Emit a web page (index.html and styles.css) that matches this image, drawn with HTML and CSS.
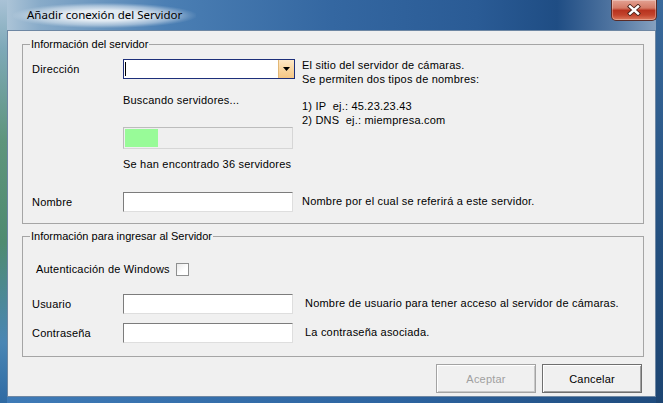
FILE: index.html
```html
<!DOCTYPE html>
<html lang="es">
<head>
  <meta charset="UTF-8" />
  <title>Añadir conexión del Servidor</title>
  <link rel="stylesheet" href="styles.css">
</head>
<body>
  <div class="window">
    <div class="titlebar">
      <span class="title">Añadir conexión del Servidor</span>
      <button class="close-btn" type="button">
        <svg width="14" height="12" viewBox="0 0 14 12">
          <path d="M3 2.5 L11 9.5 M11 2.5 L3 9.5" stroke="#4a2218" stroke-width="4.2" stroke-linecap="square" fill="none"/>
          <path d="M3 2.5 L11 9.5 M11 2.5 L3 9.5" stroke="#ffffff" stroke-width="2.4" stroke-linecap="square" fill="none"/>
        </svg>
      </button>
    </div>

    <div class="client">
      <fieldset class="group group-server">
        <legend>Información del servidor</legend>

        <div class="row row-address">
          <span class="label">Dirección</span>
          <div class="middle">
            <div class="combo">
              <span class="combo-text"><span class="caret"></span></span>
              <span class="combo-btn">
                <svg width="7" height="4" viewBox="0 0 7 4"><path d="M0 0 H7 L3.5 4 Z" fill="#000"/></svg>
              </span>
            </div>
            <div class="status status-search">Buscando servidores...</div>
            <div class="progress"><div class="progress-fill" style="width: 33px"></div></div>
            <div class="status status-found">Se han encontrado 36 servidores</div>
          </div>
          <div class="hint hint-multi">
            <div>El sitio del servidor de cámaras.</div>
            <div>Se permiten dos tipos de nombres:</div>
            <div class="hint-gap">1) IP&nbsp; ej.: 45.23.23.43</div>
            <div>2) DNS&nbsp; ej.: miempresa.com</div>
          </div>
        </div>

        <div class="row row-field row-name">
          <span class="label">Nombre</span>
          <input class="textbox" type="text" />
          <span class="hint">Nombre por el cual se referirá a este servidor.</span>
        </div>
      </fieldset>

      <fieldset class="group group-login">
        <legend>Información para ingresar al Servidor</legend>

        <div class="row row-auth">
          <span class="auth-label">Autenticación de Windows</span>
          <span class="checkbox"></span>
        </div>

        <div class="row row-field row-user">
          <span class="label">Usuario</span>
          <input class="textbox" type="text" />
          <span class="hint hint-wide">Nombre de usuario para tener acceso al servidor de cámaras.</span>
        </div>

        <div class="row row-field row-pass">
          <span class="label">Contraseña</span>
          <input class="textbox" type="password" />
          <span class="hint hint-wide">La contraseña asociada.</span>
        </div>
      </fieldset>

      <div class="buttons">
        <button class="btn btn-disabled" type="button">Aceptar</button>
        <button class="btn" type="button">Cancelar</button>
      </div>
    </div>
  </div>
</body>
</html>
```

FILE: styles.css
```css
* {
  box-sizing: border-box;
}

body {
  margin: 0;
  font-family: "Liberation Sans", Arial, sans-serif;
  font-size: 11px;
  letter-spacing: 0.2px;
  color: #000;
  background: #2b5a8c;
}

/* window frame */
.window {
  width: 663px;
  height: 403px;
  padding: 0 7px 6px 7px;
  display: flex;
  flex-direction: column;
  background:
    linear-gradient(180deg, #a9c2d6 0%, #7ea9b8 12%, #5e957c 35%, #4f8b70 60%, #4a86b4 85%, #2f6aa3 100%) left top / 7px 100% no-repeat,
    linear-gradient(180deg, #3a6a9c 0%, #24507f 60%, #1d4572 100%) right top / 7px 100% no-repeat,
    linear-gradient(90deg, #3f7bb7 0%, #2d64a0 60%, #1f4b7d 100%) left bottom / 100% 7px no-repeat,
    linear-gradient(90deg, #b3c9da 0%, #88abc9 6%, #4b7fb4 25%, #3467a1 50%, #2a5b95 72%, #1f4d84 84%, #5478a3 93%, #8ea8c4 100%);
}

.titlebar {
  height: 30px;
  display: flex;
  justify-content: space-between;
  align-items: flex-start;
}

.title {
  margin: 3px 0 0 6px;
  padding: 4px 14px 5px 14px;
  font-family: "Noto Sans", "DejaVu Sans", sans-serif;
  font-size: 11.5px;
  letter-spacing: 0;
  line-height: 16px;
  color: #000;
  background: radial-gradient(ellipse at center, rgba(255, 255, 255, 0.8) 30%, rgba(255, 255, 255, 0.4) 55%, rgba(255, 255, 255, 0.12) 66%, rgba(255, 255, 255, 0) 72%);
}

.close-btn {
  width: 46px;
  height: 21px;
  margin-right: -1px;
  padding: 0;
  display: flex;
  align-items: center;
  justify-content: center;
  border: 1px solid #5a2b26;
  border-top: none;
  border-radius: 0 0 5px 5px;
  background: linear-gradient(180deg, #e3a293 0%, #d47a66 40%, #b8331f 52%, #c2432c 75%, #dd7a5d 100%);
  box-shadow: inset 0 0 0 1px rgba(255, 255, 255, 0.3);
}

/* client area */
.client {
  flex: 1;
  display: flex;
  flex-direction: column;
  padding: 7px 11px 0 14px;
  background: #f0f0f0;
  border: 1px solid #6e87a3;
}

.group {
  margin: 0;
  padding: 0;
  border: 1px solid #a5a5a5;
  min-width: 0;
}

.group legend {
  margin-left: 7px;
  padding: 0 1px;
  font-size: 11px;
  letter-spacing: 0;
  line-height: 13px;
}

.group-server {
  padding-bottom: 11px;
}

.group-login {
  margin-top: 6px;
  padding-bottom: 13px;
}

.row {
  display: flex;
  align-items: flex-start;
  padding-left: 9px;
}

.row-field {
  align-items: center;
}

.label {
  width: 91px;
  line-height: 20px;
  flex-shrink: 0;
}

.row-address {
  margin-top: 8px;
}

.middle {
  width: 179px;
  flex-shrink: 0;
  display: flex;
  flex-direction: column;
}

.combo {
  width: 172px;
  height: 20px;
  display: flex;
  border: 1px solid #1d2f7a;
  background: #fff;
}

.combo-text {
  flex: 1;
  padding: 2px 0 0 1px;
}

.caret {
  display: block;
  width: 1px;
  height: 14px;
  background: #000;
}

.combo-btn {
  width: 16px;
  display: flex;
  align-items: center;
  justify-content: center;
  border-left: 1px solid #e2b775;
  background: linear-gradient(180deg, #fde8c8 0%, #fad7a2 50%, #f6c785 100%);
}

.status {
  line-height: 13px;
}

.status-search {
  margin-top: 15px;
}

.progress {
  width: 170px;
  height: 22px;
  margin-top: 20px;
  padding: 1px;
  border: 1px solid #bcbcbc;
  border-right-color: #d6d6d6;
  border-bottom-color: #d6d6d6;
  background: #efefef;
}

.progress-fill {
  height: 100%;
  background: #98fb98;
}

.status-found {
  margin-top: 9px;
}

.hint {
  line-height: 13.7px;
}

.hint-gap {
  margin-top: 13.7px;
}

.row-name {
  margin-top: 21px;
}

.textbox {
  width: 170px;
  height: 20px;
  margin: 0;
  padding: 0 2px;
  font: inherit;
  border: 1px solid;
  border-color: #7c7c7c #dedede #dedede #7c7c7c;
  background: #fff;
  flex-shrink: 0;
}

.row-field .hint {
  margin-left: 9px;
}

.row-field .hint-wide {
  margin-left: 12px;
}

.row-auth {
  margin-top: 20px;
  padding-left: 13px;
  align-items: center;
}

.auth-label {
  line-height: 13px;
}

.checkbox {
  width: 13px;
  height: 13px;
  margin-left: 6px;
  border: 1px solid #8e8f8f;
  background: linear-gradient(135deg, #eaeaea 0%, #ffffff 60%);
}

.row-user {
  margin-top: 18px;
}

.row-pass {
  margin-top: 9px;
}

/* dialog buttons */
.buttons {
  margin-top: 7px;
  margin-right: 2px;
  display: flex;
  justify-content: flex-end;
  gap: 6px;
}

.btn {
  width: 100px;
  height: 29px;
  padding: 0;
  font-family: inherit;
  font-size: 11px;
  letter-spacing: 0.2px;
  color: #000;
  background: #f0f0f0;
  border: 1px solid #6f6f6f;
  box-shadow: inset 1px 1px 0 #ffffff, inset -1px -1px 0 #a0a0a0;
}

.btn-disabled {
  color: #a0a0a0;
  border-color: #a3a3a3;
  box-shadow: inset 1px 1px 0 #ffffff, inset -1px -1px 0 #c8c8c8;
}
```
